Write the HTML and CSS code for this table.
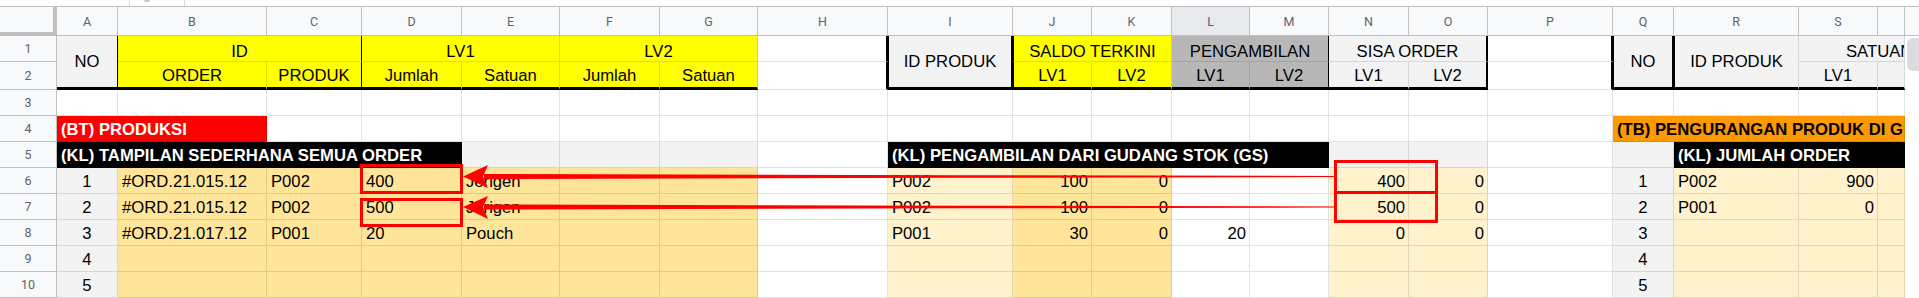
FILE: index.html
```html
<!DOCTYPE html>
<html>
<head>
<meta charset="utf-8">
<link rel="stylesheet" href="styles.css">
</head>
<body>
<div class="page">
  <div class="topstrip"><div class="namebox"><span class="nb-blob"></span></div></div>
  <div class="sheet">
    <!-- column header row -->
    <div class="corner"></div>
    <div class="ch">A</div><div class="ch">B</div><div class="ch">C</div><div class="ch">D</div><div class="ch">E</div>
    <div class="ch">F</div><div class="ch">G</div><div class="ch">H</div><div class="ch">I</div><div class="ch">J</div>
    <div class="ch">K</div><div class="ch sel">L</div><div class="ch">M</div><div class="ch">N</div><div class="ch">O</div>
    <div class="ch">P</div><div class="ch">Q</div><div class="ch">R</div><div class="ch">S</div><div class="ch"></div>
    <div class="ch end"></div>
    <div class="scroll"><div class="thumb"></div></div>

    <!-- row 1 -->
    <div class="rh">1</div>
    <div class="c hd mid ctr r2 bb3 brk">NO</div>
    <div class="c y ctr s2 brk top">ID</div>
    <div class="c y ctr s2 top">LV1</div>
    <div class="c y ctr s2 top">LV2</div>
    <div class="c brk2"></div>
    <div class="c hd mid ctr r2 bb3 blk brk2">ID PRODUK</div>
    <div class="c y ctr s2 blk top">SALDO TERKINI</div>
    <div class="c g ctr s2 brk top">PENGAMBILAN</div>
    <div class="c hd ctr s2 brk2 top">SISA ORDER</div>
    <div class="c brk2"></div>
    <div class="c hd mid ctr r2 bb3 blk brk2">NO</div>
    <div class="c hd mid ctr r2 bb3 blk">ID PRODUK</div>
    <div class="c hd s2 clip top">SATUAN</div>

    <!-- row 2 -->
    <div class="rh">2</div>
    <div class="c y ctr bb3">ORDER</div>
    <div class="c y ctr bb3 brk">PRODUK</div>
    <div class="c y ctr bb3">Jumlah</div>
    <div class="c y ctr bb3">Satuan</div>
    <div class="c y ctr bb3">Jumlah</div>
    <div class="c y ctr bb3">Satuan</div>
    <div class="c brk2"></div>
    <div class="c y ctr bb3 blk">LV1</div>
    <div class="c y ctr bb3">LV2</div>
    <div class="c g ctr bb3">LV1</div>
    <div class="c g ctr bb3 brk">LV2</div>
    <div class="c hd ctr bb3">LV1</div>
    <div class="c hd ctr bb3 brk2">LV2</div>
    <div class="c brk2"></div>
    <div class="c hd ctr bb3">LV1</div>
    <div class="c hd bb3"><span class="stripe"></span></div>

    <!-- row 3 -->
    <div class="rh">3</div>
    <div class="c"></div><div class="c"></div><div class="c"></div><div class="c"></div><div class="c"></div>
    <div class="c"></div><div class="c"></div><div class="c"></div><div class="c"></div><div class="c"></div>
    <div class="c"></div><div class="c"></div><div class="c"></div><div class="c"></div><div class="c"></div>
    <div class="c"></div><div class="c"></div><div class="c"></div><div class="c"></div><div class="c"></div>

    <!-- row 4 -->
    <div class="rh">4</div>
    <div class="c red b s2">(BT) PRODUKSI</div>
    <div class="c"></div>
    <div class="c"></div><div class="c"></div><div class="c"></div><div class="c"></div><div class="c"></div>
    <div class="c"></div><div class="c"></div><div class="c"></div><div class="c"></div><div class="c"></div>
    <div class="c"></div><div class="c"></div><div class="c"></div>
    <div class="c orange b s4">(TB) PENGURANGAN PRODUK DI GUDANG</div>

    <!-- row 5 -->
    <div class="rh">5</div>
    <div class="c black b s4">(KL) TAMPILAN SEDERHANA SEMUA ORDER</div>
    <div class="c hd"></div><div class="c hd"></div><div class="c hd"></div>
    <div class="c"></div>
    <div class="c black b s5">(KL) PENGAMBILAN DARI GUDANG STOK (GS)</div>
    <div class="c hd"></div><div class="c hd"></div>
    <div class="c"></div>
    <div class="c hd"></div>
    <div class="c black b s3">(KL) JUMLAH ORDER</div>

    <!-- row 6 -->
    <div class="rh">6</div>
    <div class="c hd ctr">1</div>
    <div class="c ly">#ORD.21.015.12</div><div class="c ly">P002</div><div class="c ly">400</div><div class="c ly">Jerigen</div><div class="c ly"></div><div class="c ly"></div>
    <div class="c"></div>
    <div class="c py">P002</div><div class="c ly rt">100</div><div class="c ly rt">0</div>
    <div class="c rt"></div><div class="c rt"></div>
    <div class="c py rt">400</div><div class="c py rt">0</div>
    <div class="c"></div>
    <div class="c hd ctr">1</div>
    <div class="c py">P002</div><div class="c py rt">900</div><div class="c py"></div>

    <!-- row 7 -->
    <div class="rh">7</div>
    <div class="c hd ctr">2</div>
    <div class="c ly">#ORD.21.015.12</div><div class="c ly">P002</div><div class="c ly">500</div><div class="c ly">Jerigen</div><div class="c ly"></div><div class="c ly"></div>
    <div class="c"></div>
    <div class="c py">P002</div><div class="c ly rt">100</div><div class="c ly rt">0</div>
    <div class="c rt"></div><div class="c rt"></div>
    <div class="c py rt">500</div><div class="c py rt">0</div>
    <div class="c"></div>
    <div class="c hd ctr">2</div>
    <div class="c py">P001</div><div class="c py rt">0</div><div class="c py"></div>

    <!-- row 8 -->
    <div class="rh">8</div>
    <div class="c hd ctr">3</div>
    <div class="c ly">#ORD.21.017.12</div><div class="c ly">P001</div><div class="c ly">20</div><div class="c ly">Pouch</div><div class="c ly"></div><div class="c ly"></div>
    <div class="c"></div>
    <div class="c py">P001</div><div class="c ly rt">30</div><div class="c ly rt">0</div>
    <div class="c rt">20</div><div class="c rt"></div>
    <div class="c py rt">0</div><div class="c py rt">0</div>
    <div class="c"></div>
    <div class="c hd ctr">3</div>
    <div class="c py"></div><div class="c py"></div><div class="c py"></div>

    <!-- row 9 -->
    <div class="rh">9</div>
    <div class="c hd ctr">4</div>
    <div class="c ly"></div><div class="c ly"></div><div class="c ly"></div><div class="c ly"></div><div class="c ly"></div><div class="c ly"></div>
    <div class="c"></div>
    <div class="c py"></div><div class="c ly"></div><div class="c ly"></div>
    <div class="c"></div><div class="c"></div>
    <div class="c py"></div><div class="c py"></div>
    <div class="c"></div>
    <div class="c hd ctr">4</div>
    <div class="c py"></div><div class="c py"></div><div class="c py"></div>

    <!-- row 10 -->
    <div class="rh">10</div>
    <div class="c hd ctr">5</div>
    <div class="c ly"></div><div class="c ly"></div><div class="c ly"></div><div class="c ly"></div><div class="c ly"></div><div class="c ly"></div>
    <div class="c"></div>
    <div class="c py"></div><div class="c ly"></div><div class="c ly"></div>
    <div class="c"></div><div class="c"></div>
    <div class="c py"></div><div class="c py"></div>
    <div class="c"></div>
    <div class="c hd ctr">5</div>
    <div class="c py"></div><div class="c py"></div><div class="c py"></div>
  </div>

  <svg class="overlay" width="1919" height="298" viewBox="0 0 1919 298" xmlns="http://www.w3.org/2000/svg">
    <g fill="none" stroke="#ff0000" stroke-width="3">
      <rect x="361.5" y="165.5" width="100" height="27"/>
      <rect x="361.5" y="199.5" width="100" height="26"/>
      <rect x="1335.5" y="161.5" width="101" height="31"/>
      <rect x="1335.5" y="192.5" width="101" height="29"/>
    </g>
    <g fill="#ff0000">
      <polygon points="484,174 960,175.2 1334,176 1334,177 960,177.8 484,179"/>
      <polygon points="463,176.5 488,165 483,176.5 488,188"/>
      <polygon points="484,204.5 960,205.7 1334,206.5 1334,207.5 960,208.3 484,209.5"/>
      <polygon points="463,207 488,196 483,207 488,219"/>
    </g>
  </svg>
</div>
</body>
</html>
```

FILE: styles.css
```css
* { box-sizing: border-box; }
html, body { margin: 0; padding: 0; background: #ffffff; }
body { width: 1919px; height: 298px; overflow: hidden; }

.page { position: relative; width: 1919px; height: 298px; }

.topstrip { height: 6px; display: flex; }
.namebox {
  margin-left: 129px; width: 56px; height: 6px;
  border-left: 1px solid #dadce0; border-right: 1px solid #dadce0;
  display: flex; align-items: flex-start; padding-left: 14px;
}
.nb-blob { width: 6px; height: 2px; background: #c8c8c8; border-radius: 0 0 2px 2px; }

.sheet {
  display: grid;
  grid-template-columns: 57px 61px 149px 95px 100px 98px 100px 98px 130px 125px 79px 80px 78px 79px 80px 79px 125px 61px 125px 79px 27px 14px;
  grid-template-rows: 30px 26px 28px repeat(8, 26px);
  font-family: "Liberation Sans", Arial, sans-serif;
  font-size: 16.67px;
  color: #000;
}

/* headers */
.corner {
  background: #f8f9fa;
  border-top: 1px solid #c0c0c0;
  border-right: 4px solid #c0c0c0;
  border-bottom: 4px solid #c0c0c0;
}
.ch {
  background: #f8f9fa;
  border-top: 1px solid #c0c0c0;
  border-bottom: 1px solid #c0c0c0;
  border-right: 1px solid #c0c0c0;
  display: flex; align-items: center; justify-content: center;
  font-family: Roboto, "Liberation Sans", sans-serif;
  font-size: 12.5px; color: #5f6368;
}
.ch.sel { background: #e8eaed; }
.ch.end { border-right: none; background: #f8f9fa; }

.rh {
  background: #f8f9fa;
  border-right: 1px solid #c0c0c0;
  border-bottom: 1px solid #c0c0c0;
  display: flex; align-items: center; justify-content: center;
  font-family: Roboto, "Liberation Sans", sans-serif;
  font-size: 12.5px; color: #5f6368;
}

.scroll {
  grid-column: 22; grid-row: 2 / 12;
  background: #ffffff;
  padding: 2px 0 0 2px;
}
.thumb { width: 12px; height: 33px; background: #dadce0; border-radius: 6px 0 0 6px; }

/* cells */
.c {
  border-right: 1px solid rgba(0, 0, 0, 0.115);
  border-bottom: 1px solid rgba(0, 0, 0, 0.115);
  display: flex; align-items: flex-end; justify-content: flex-start;
  padding: 0 3px 2px 4px;
  line-height: 19px;
  white-space: nowrap; overflow: hidden;
}
.c.top { padding-bottom: 0; }
.c.ctr { justify-content: center; padding-left: 0; padding-right: 0; }
.c.rt { justify-content: flex-end; }
.c.mid { align-items: center; padding-bottom: 0; }
.c.b { font-weight: bold; }
.c.clip { padding-left: 47px; overflow: hidden; }

.s2 { grid-column: span 2; }
.s3 { grid-column: span 3; }
.s4 { grid-column: span 4; }
.s5 { grid-column: span 5; }
.r2 { grid-row: span 2; }

.bb3 { border-bottom: 3px solid #000; }
.brk { border-right: 1px solid #000; }
.brk2 { border-right: 2px solid #000; }
.blk { border-left: 1px solid #000; }

/* fills */
.hd { background: #f3f3f3; }
.y { background: #ffff00; }
.g { background: #b7b7b7; }
.ly { background: #ffe599; }
.py { background: #fff2cc; }
.red { background: #ff0000; color: #ffffff; }
.orange { background: #ff9900; color: #000; }
.black { background: #000000; color: #ffffff; }

.stripe { display: block; width: 2px; height: 14px; background: #ffe0a0; margin-left: 21px; margin-bottom: 1px; }

.overlay { position: absolute; left: 0; top: 0; pointer-events: none; }
```
